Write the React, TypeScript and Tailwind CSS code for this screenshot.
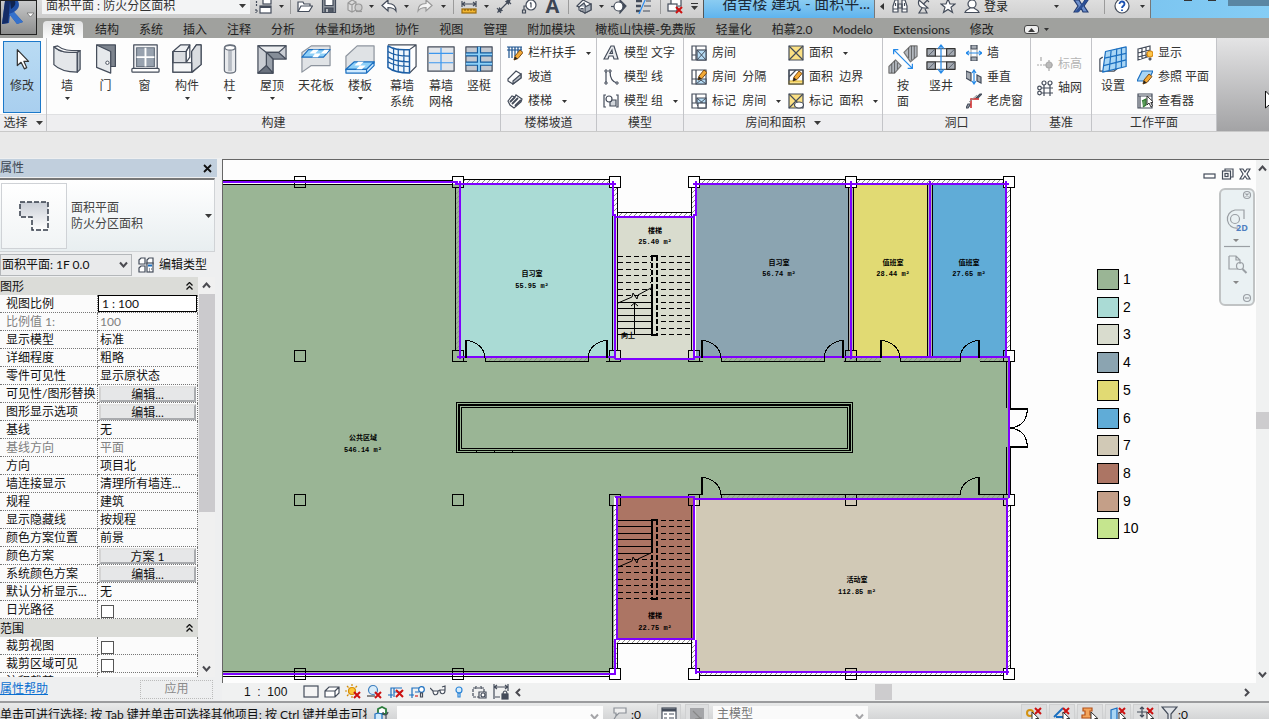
import React from "react";

type Kids = { children?: React.ReactNode };

const INK = "#444c5a";
const BLUE = "#1b6fc0";

/* ---------- small drawing helpers ---------- */

function Svg({ w = 16, h = 16, children }: Kids & { w?: number; h?: number }) {
  return (
    <svg width={w} height={h} viewBox={`0 0 ${w} ${h}`} fill="none" stroke={INK} strokeWidth="1.2" className="block shrink-0" aria-hidden="true">
      {children}
    </svg>
  );
}

function BigSvg({ children }: Kids) {
  return (
    <svg width="30" height="30" viewBox="0 0 32 32" fill="none" stroke={INK} strokeWidth="1.3" strokeLinejoin="round" className="block shrink-0" aria-hidden="true">
      {children}
    </svg>
  );
}

function Caret({ up = false }: { up?: boolean }) {
  return (
    <svg width="7" height="4" viewBox="0 0 7 4" className="block shrink-0" aria-hidden="true">
      <path d={up ? "M0 4h7L3.500 0z" : "M0 0h7L3.500 4z"} fill="#3a3a3a" />
    </svg>
  );
}

function SmallCaret() {
  return (
    <svg width="5" height="3" viewBox="0 0 5 3" className="block shrink-0" aria-hidden="true">
      <path d="M0 0h5L2.500 3z" fill="#333" />
    </svg>
  );
}

function RedX({ x, y, s = 6 }: { x: number; y: number; s?: number }) {
  return <path d={`M${x} ${y}l${s} ${s}M${x + s} ${y}l${-s} ${s}`} stroke="#cc1111" strokeWidth="2" />;
}

function Pointer({ x, y }: { x: number; y: number }) {
  return <path d={`M${x} ${y}v9l2-2 2 4 1.500-1-1.700-3.500h3z`} fill="#fff" stroke="#333" strokeWidth="1" />;
}

function Pencil() {
  return (
    <g>
      <path d="M7 15l1-4 5-6 3 2.500-5 6z" fill="#f3a935" stroke="#7b4a12" strokeWidth="1" />
      <path d="M7 15l1-3.500 2.500 2z" fill="#222" stroke="none" />
    </g>
  );
}

/* ---------- quick access toolbar ---------- */

const qat: Record<string, React.ReactNode> = {
  windows: (
    <Svg w={17}>
      <path d="M1.500 8V1.500h6M1 11v4M1 13h3" strokeDasharray="2 1" />
      <rect x="8" y="1" width="8" height="5" fill="#fff" />
      <rect x="5" y="8" width="11" height="7" fill="#fff" />
      <path d="M5 9h11" strokeWidth="2" />
    </Svg>
  ),
  open: (
    <Svg>
      <path d="M1 13V4h5l1 2h6v2" fill="#fff" />
      <path d="M1 13.500L4 8h11.500L12 13.500z" fill="#fff" />
    </Svg>
  ),
  save: (
    <Svg>
      <path d="M1.500 1.500h13v13h-13z" fill="#8f959d" />
      <path d="M4 1.500h8v6H4z" fill="#fff" />
      <path d="M4 10h8v4.500H4z" fill="#525a66" />
      <path d="M6 11v3" stroke="#fff" />
    </Svg>
  ),
  sync: (
    <Svg>
      <path d="M1 5l4-3 4 2v8l-4 2-4-2zM1 5l4 2 4-3M5 7v7" stroke="#999" fill="#ddd" />
      <circle cx="11.500" cy="9.500" r="3.500" stroke="#999" fill="#ccc" />
      <path d="M9 13.500h6" stroke="#999" />
    </Svg>
  ),
  undo: (
    <Svg>
      <path d="M1 7.500L7 2v3.500c5 0 8 2 8 7.500-2-3-4-3.500-8-3.500V13z" fill="#fff" />
    </Svg>
  ),
  redo: (
    <Svg>
      <path d="M15 7.500L9 2v3.500c-5 0-8 2-8 7.500 2-3 4-3.500 8-3.500V13z" fill="#f4f4f4" stroke="#999" />
    </Svg>
  ),
  measure: (
    <Svg>
      <path d="M1 6h14M1 3v6M15 3v6M4 4L1.500 6 4 8M12 4l2.500 2L12 8" />
      <rect x="1" y="11" width="14" height="4" fill="#f2b632" stroke="#9c6c0c" />
      <path d="M4 11v2M7 11v2M10 11v2M13 11v2" stroke="#7b5000" strokeWidth="1" />
    </Svg>
  ),
  dim: (
    <Svg>
      <path d="M3 13L13 3M1 10l4 5M10 1l5 5" />
      <path d="M2 14l4-1.500L3.500 10zM14 2l-4 1.500L12.500 6z" fill={INK} />
    </Svg>
  ),
  tag: (
    <Svg>
      <circle cx="10" cy="7" r="5" fill="#fff" />
      <path d="M10 4.500v5M9 5.500l1-1M5 8H3v4M1.500 12h3v3h-3z" />
    </Svg>
  ),
  house: (
    <Svg>
      <path d="M1 8l6-6 8 4v6l-6 3-6-3V9z" fill="#fff" />
      <path d="M9 9l6-3v6l-6 3zM1 8l2 1 5-4 2 4" fill="#a9b1bb" />
      <path d="M5 10.500h2v3H5z" fill="#fff" />
    </Svg>
  ),
  section: (
    <Svg>
      <path d="M9 2l6 6-6 7z" fill={INK} />
      <circle cx="7.500" cy="8.500" r="4.500" fill="#fff" />
      <path d="M0 8.500h3" />
    </Svg>
  ),
  thin: (
    <Svg>
      <path d="M1 3h6M1 8h5M1 13h4" strokeWidth="2.500" />
      <path d="M11 3h5M9 8h7M8 13h7" />
      <path d="M11 0L4 16" stroke="#2a8cf0" />
    </Svg>
  ),
  close: (
    <Svg>
      <path d="M4 6V1h10v7h-3" fill="#fff" />
      <rect x="1" y="6" width="9" height="7" fill="#fff" />
      <RedX x={9} y={9} />
    </Svg>
  ),
  binoculars: (
    <Svg>
      <path d="M3 2h3v12H1V8zM13 2h-3v12h5V8z" fill="#fff" />
      <path d="M6 6h4v4H6zM1 11h5M10 11h5M3.500 5v3M12.500 5v3" />
    </Svg>
  ),
  dish: (
    <Svg>
      <path d="M3 2c-2 6 2 9 9 8z" fill="#fff" />
      <path d="M7.500 6l4-4M10 1l3 3M6 10l-3 5h8l-2-4" />
    </Svg>
  ),
  star: (
    <Svg>
      <path d="M8 1l2 5h5l-4 3.300 1.500 5L8 11.500 3.500 14.300 5 9.300 1 6h5z" fill="#fff" />
    </Svg>
  ),
  user: (
    <Svg>
      <circle cx="8" cy="6" r="4" fill="#fff" />
      <path d="M1 14.500c1-3 4-3 5-4.500h4c1 1.500 4 1.500 5 4.500z" fill="#fff" />
    </Svg>
  ),
  exchange: (
    <Svg>
      <path d="M1 2h5l3 5 3-5h3l-4 6 4 6h-5l-2-4-3 4H1l4-6z" fill="#6d8fcc" stroke="#223a70" />
      <path d="M12 2h3l-9 12H2z" fill="#2c4f94" stroke="none" />
    </Svg>
  ),
  help: (
    <Svg>
      <circle cx="8" cy="8" r="7" fill="#fff" />
      <path d="M5.500 6c0-3.500 5-3.200 5 0 0 2-2.500 2-2.500 4M8 11.500v1.500" stroke="#1a50b0" strokeWidth="1.800" />
    </Svg>
  ),
};

function Tool({ name, label, className }: { name: string; label: string; className: string }) {
  return (
    <button aria-label={label} className={`flex h-4 shrink-0 items-center justify-center ${className}`}>
      {qat[name]}
    </button>
  );
}

function Drop({ label, className }: { label: string; className: string }) {
  return (
    <button aria-label={label} className={`flex h-4 shrink-0 items-center justify-center ${className}`}>
      <SmallCaret />
    </button>
  );
}

function Rule() {
  return (
    <span className="flex h-4 w-[10px] shrink-0 justify-center">
      <span className="h-4 w-px bg-[#9b9b9b]" />
    </span>
  );
}

function QuickAccess() {
  return (
    <div className="flex h-[18px] shrink-0 items-end overflow-hidden">
      <div className="flex h-[18px] w-[666px] shrink-0 items-end bg-gradient-to-b from-[#dcdcdc] to-[#cdcdcd] pb-1 pl-[5px]">
        <label className="relative flex h-4 w-[208px] shrink-0 items-center bg-[#f3f4f5]">
          <select aria-label="视图" className="w-full appearance-none pb-px pl-1 text-xs leading-[15px] text-[#333] outline-none">
            <option>面积平面 : 防火分区面积</option>
          </select>
          <span className="pointer-events-none absolute right-1">
            <Caret />
          </span>
        </label>
        <Tool name="windows" label="切换窗口" className="w-[27px]" />
        <Drop label="窗口列表" className="w-2" />
        <Rule />
        <Tool name="open" label="打开" className="w-5" />
        <Tool name="save" label="保存" className="w-7" />
        <Tool name="sync" label="同步" className="w-[23px]" />
        <Drop label="同步选项" className="w-[11px]" />
        <Tool name="undo" label="放弃" className="w-6" />
        <Drop label="放弃列表" className="w-[11px]" />
        <Tool name="redo" label="重做" className="w-[26px]" />
        <Drop label="重做列表" className="w-[10px]" />
        <Rule />
        <Tool name="measure" label="测量" className="w-[22px]" />
        <Drop label="测量选项" className="w-3" />
        <Tool name="dim" label="对齐尺寸标注" className="w-6" />
        <Tool name="tag" label="按类别标记" className="w-[26px]" />
        <button aria-label="文字" className="h-4 w-[21px] shrink-0 font-['Open_Sans',sans-serif] text-xl leading-[14px] font-bold text-[#3b4453]">
          A
        </button>
        <Rule />
        <Tool name="house" label="默认三维视图" className="w-[22px]" />
        <Drop label="三维视图选项" className="w-3" />
        <Tool name="section" label="剖面" className="w-6" />
        <Tool name="thin" label="细线" className="w-6" />
        <Rule />
        <Tool name="close" label="关闭隐藏窗口" className="w-5" />
        <button aria-label="自定义快速访问工具栏" className="flex h-4 w-[18px] shrink-0 flex-col items-center justify-center gap-[2px]">
          <span className="h-px w-[7px] bg-[#333]" />
          <Caret />
        </button>
      </div>
      <div className="flex h-[18px] w-[171px] shrink-0 items-end justify-end overflow-hidden border-l border-[#555] bg-gradient-to-b from-[#8accf2] to-[#5fb4ee] pr-1 pb-1">
        <span className="text-[15px] leading-[22px] whitespace-nowrap text-[#1c2a38]">宿舍楼 建筑 - 面积平...</span>
      </div>
      <div className="flex h-[18px] w-[277px] shrink-0 items-end border-r border-l border-[#777] bg-gradient-to-b from-[#dedede] to-[#cfcfcf] pb-1">
        <button aria-label="收起" className="flex h-4 w-[13px] items-center justify-center">
          <svg width="4" height="7" viewBox="0 0 4 7" aria-hidden="true">
            <path d="M4 0v7L0 3.500z" fill="#333" />
          </svg>
        </button>
        <Tool name="binoculars" label="搜索" className="w-6" />
        <Tool name="dish" label="通信中心" className="w-6" />
        <Tool name="star" label="收藏夹" className="w-6" />
        <Tool name="user" label="账户" className="w-6" />
        <button className="flex h-4 flex-1 items-center justify-between pt-px pr-1 text-xs leading-4 text-[#222]">
          登录
          <SmallCaret />
        </button>
        <Tool name="exchange" label="应用商店" className="w-9" />
        <Rule />
        <Tool name="help" label="帮助" className="w-[25px]" />
        <Drop label="帮助选项" className="w-4" />
      </div>
      <div className="flex h-[18px] min-w-0 flex-1 items-start justify-end bg-gradient-to-r from-[#7cc5f0] to-[#85cdf5]">
        <span className="mr-4 h-px w-2 bg-[#333]" />
        <span className="mr-3 h-px w-2 bg-[#333]" />
        <button aria-label="关闭" className="h-[6px] w-[41px] bg-[#5a86a3]" />
      </div>
    </div>
  );
}

/* ---------- ribbon tabs ---------- */

const tabs = ["结构", "系统", "插入", "注释", "分析", "体量和场地", "协作", "视图", "管理", "附加模块", "橄榄山快模-免费版", "轻量化", "柏慕2.0", "Modelo", "Extensions", "修改"];

function Tabs() {
  return (
    <nav className="flex h-5 items-end overflow-hidden bg-[#a0a19e] pl-[6px] text-xs leading-[17px] text-[#222]">
      <button className="h-[17px] rounded-t-sm bg-gradient-to-b from-[#e2e3e4] to-[#fbfbfb] px-2">建筑</button>
      <span className="w-[2px]" />
      {tabs.map((t) => (
        <button key={t} className="h-[17px] shrink-0 px-[10px] whitespace-nowrap">
          {t}
        </button>
      ))}
      <button aria-label="最小化功能区" className="ml-5 flex h-[17px] items-center gap-[5px]">
        <span className="flex h-[9px] w-[15px] items-center justify-center rounded-[3px] border border-[#444] bg-[#eee]">
          <Caret up />
        </span>
        <SmallCaret />
      </button>
    </nav>
  );
}

/* ---------- ribbon icons ---------- */

const big: Record<string, React.ReactNode> = {
  arrow: (
    <BigSvg>
      <path d="M11 6v17l4-3.500 3.500 7 2.500-1.300-3-6.700h5z" fill="#fff" stroke="#333" />
    </BigSvg>
  ),
  wall: (
    <BigSvg>
      <path d="M2 3c7 6 13 6 25 6v21C15 30 8 28 2 22z" fill="#e4e7ea" />
      <path d="M2 3l4-1c6 5 12 5 24 5l-3 2C15 9 9 9 2 3z" fill="#fff" />
      <path d="M27 9l3-2v20l-3 3z" fill="#b9bfc7" />
    </BigSvg>
  ),
  door: (
    <BigSvg>
      <path d="M6 1h20v23h-6" fill="#7d848e" />
      <path d="M6 1l15 7v23L6 25z" fill="#e6e9ec" />
      <circle cx="17.500" cy="20" r="1.800" fill="#fff" strokeWidth="1" />
    </BigSvg>
  ),
  window: (
    <BigSvg>
      <rect x="4" y="1" width="25" height="26" fill="#f4f5f7" />
      <rect x="7" y="4" width="19" height="20" fill="#98a2af" stroke="#6b7582" />
      <path d="M16.500 4v20M7 14h19" stroke="#fff" strokeWidth="2" />
      <rect x="2" y="26" width="29" height="4" rx="1" fill="#fff" />
    </BigSvg>
  ),
  component: (
    <BigSvg>
      <path d="M1 8l8-7h10l-4 7v12h6V8l5-7h5v21l-9 8H1z" fill="#eef0f2" />
      <path d="M21 8v22l10-8V1h-5zM15 8v12H1V8z" fill="#dadde1" />
      <path d="M1 8h14l4-7v13l-4 6H1zM15 8l4-7" />
      <path d="M1 20v10h20V20z" fill="#f5f6f7" />
    </BigSvg>
  ),
  column: (
    <BigSvg>
      <path d="M10 4c0-4 12-4 12 0v24c0 4-12 4-12 0z" fill="#e8eaed" stroke="#68707c" />
      <path d="M16 7v22" stroke="#b7bcc4" strokeWidth="4" />
      <ellipse cx="16" cy="4" rx="5.500" ry="2.500" fill="#fff" stroke="#68707c" />
    </BigSvg>
  ),
  roof: (
    <BigSvg>
      <path d="M1 2h30v14H17v15H1z" fill="#c9cdd3" />
      <path d="M1 2l9 7h13l8-7z" fill="#eceef0" />
      <path d="M10 9h13l8 7H17z" fill="#858d98" />
      <path d="M10 9v14l7 8V16z" fill="#9aa1ab" />
      <path d="M1 31l9-8 7 8z" fill="#6a727e" />
    </BigSvg>
  ),
  ceiling: (
    <BigSvg>
      <path d="M1 9v21l10-7h20V2H11z" fill="#e0e3e6" stroke="#8d949e" />
      <path d="M8 6h23l-7 8H1z" fill="#8fd0f8" stroke={BLUE} />
      <path d="M13 6h6l-4 4h6l-3 4h-6l3-4H9zM25 6h5l-3 4h-6z" fill="#fff" stroke="none" />
    </BigSvg>
  ),
  floor: (
    <BigSvg>
      <path d="M1 13L13 2h18v18l-8 8H1z" fill="#dfe2e5" stroke="#8d949e" />
      <path d="M10 19h21l-8 8H1z" fill="#8fd0f8" stroke={BLUE} />
      <path d="M1 27h22v4H1zM23 27l8-8v4l-8 8z" fill="#cfeaff" stroke={BLUE} />
      <path d="M14 19h6l-4 4h6l-4 4h-6l4-4h-6z" fill="#fff" stroke="none" />
    </BigSvg>
  ),
  curtain: (
    <BigSvg>
      <path d="M24 6l7-5v23l-7 7M1 1h30" fill="#fff" />
      <path d="M1 2c6 4 12 4 23 4v25C14 31 7 30 1 25z" fill="#f0f7fd" stroke="#1c5ea5" strokeWidth="1.600" />
      <path d="M7 4v24M12 5v25M18 6v25M1 8c6 4 12 5 23 5M1 14c6 4 12 5 23 5M1 19c6 4 12 5 23 5" stroke="#1c5ea5" />
    </BigSvg>
  ),
  grid: (
    <BigSvg>
      <rect x="2" y="3" width="28" height="26" fill="#e2e5e9" />
      <path d="M3 10h26M16 4v24M3 20h26" stroke="#3c97ee" />
    </BigSvg>
  ),
  mullion: (
    <BigSvg>
      <rect x="2" y="3" width="28" height="26" fill="#c3c8d0" />
      <path d="M2 11h28M2 21h28M16 3v26" stroke="#135a9c" strokeWidth="4.500" />
      <path d="M2 11h28M2 21h28M16 3v26" stroke="#8cd0f7" strokeWidth="2" />
    </BigSvg>
  ),
  face: (
    <BigSvg>
      <path d="M17 9l7-7h7v11l-7 6z" fill="#b3b8bf" stroke="#777" />
      <path d="M1 24l7-7 6 6-7 8H1z" fill="#b3b8bf" stroke="#777" />
      <path d="M22 4v11M25 2v15M28 2v13M4 21v10M7 18v13M10 20v7" stroke="#444" strokeWidth="0.800" />
      <path d="M6 6l20 20M6 11V6h5M26 21v5h-5" stroke="#268ae8" />
    </BigSvg>
  ),
  shaft: (
    <BigSvg>
      <path d="M1 5h9v8H1zM22 5h9v8h-9zM1 19h9v8H1zM22 19h9v8h-9z" fill="#a5abb3" stroke="#333" />
      <path d="M10 5h12M10 13h12M10 19h12M10 27h12" stroke="#333" strokeWidth="1" />
      <path d="M3 12l6-6M24 12l6-6M3 26l6-6M24 26l6-6" strokeWidth="0.800" />
      <path d="M16 1v30M13 5l3-4 3 4M13 27l3 4 3-4" stroke="#268ae8" />
    </BigSvg>
  ),
  plane: (
    <BigSvg>
      <path d="M5 14l-3 2v13h15l6-5" fill="#fff" />
      <path d="M8 8l22-5v21L5 30z" fill="#a9d6f5" stroke={BLUE} />
      <path d="M14 7l-2 21M20 5l-1 22M25 4v21M7 15l23-5M6 23l24-6" stroke={BLUE} />
    </BigSvg>
  ),
};

const small: Record<string, React.ReactNode> = {
  railing: (
    <Svg>
      <path d="M0 2h15M0 5h15M2 2v11M5 2v11M8 2v9M11 2v6M14 2v3" stroke="#174f8c" />
      <Pencil />
    </Svg>
  ),
  ramp: (
    <Svg>
      <path d="M1 10L9 2l5 3v4l-8 6-5-3z" fill="#fff" />
      <path d="M6 12l8-7v4l-8 6z" fill="#b9bfc7" />
    </Svg>
  ),
  stair: (
    <Svg>
      <path d="M1 8l4-5 3 1 1-2 3 2 3 2-1 3-7 6-4-3z" fill="#fff" />
      <path d="M3 9l5-5M5 11l6-6M8 13l6-6" strokeWidth="1.800" />
    </Svg>
  ),
  text: (
    <Svg>
      <path d="M1 14L8 1h3l4 13h-4l-1-3H6l-1 3z" fill="#e9ebee" />
      <path d="M7 8.500h2.500L9 5z" fill="#fff" />
    </Svg>
  ),
  line: (
    <Svg>
      <path d="M3 3v11M7 2c0 7 2 11 7 12" />
      <path d="M2 1h2v2H2zM2 13h2v2H2zM6 1h2v2H6zM13 13h2v2h-2z" fill="#fff" strokeWidth="1" />
    </Svg>
  ),
  group: (
    <Svg>
      <path d="M3 2H1v12h2M13 2h2v12h-2" />
      <path d="M7 7h6v6H7z" fill="#d2d6db" />
      <circle cx="6" cy="6" r="3" fill="#fff" />
    </Svg>
  ),
  room: (
    <Svg>
      <path d="M1 1h14v14H1zM5 1v9H1M5 10v5" fill="#fff" />
      <rect x="6" y="5" width="9" height="10" fill="#b6dcf5" />
      <path d="M6 5l9 10M15 5L6 15" strokeWidth="1" />
    </Svg>
  ),
  roomSplit: (
    <Svg>
      <path d="M1 1h14v14H1zM5 1v9H1" fill="#fff" />
      <path d="M5 10h10v5H5z" fill="#b6dcf5" />
      <path d="M5 15l5-4 5 4" strokeWidth="1" />
      <g transform="translate(0 -4)">
        <Pencil />
      </g>
    </Svg>
  ),
  roomTag: (
    <Svg>
      <path d="M1 1h14v14H1zM5 1v9H1" fill="#fff" />
      <path d="M6 5h9v6H6z" fill="#b6dcf5" />
      <path d="M6 5l9 8M15 5l-9 8" strokeWidth="1" />
      <rect x="7" y="10" width="8" height="5" fill="#fff" />
    </Svg>
  ),
  area: (
    <Svg>
      <path d="M1 1h14v14H1z" fill="#fbe083" />
      <path d="M1 1l14 14M15 1L1 15" />
    </Svg>
  ),
  areaEdge: (
    <Svg>
      <path d="M1 1h14v14H1z" fill="#fff" />
      <path d="M1 12h14v3H1z" fill="#fbe083" stroke="#d6ac25" />
      <path d="M1 1h14v14H1zM1 8l7-7" />
      <g transform="translate(-2 -3)">
        <Pencil />
      </g>
    </Svg>
  ),
  areaTag: (
    <Svg>
      <path d="M1 1h14v14H1z" fill="#fbe083" />
      <path d="M1 1l14 14M15 1L1 15" />
      <ellipse cx="11" cy="12" rx="4.500" ry="3" fill="#fff" />
    </Svg>
  ),
  openWall: (
    <Svg>
      <path d="M5 0h6v4H5zM5 12h6v4H5z" fill="#a5abb3" />
      <path d="M5 4v8M11 4v8" stroke="#999" strokeWidth="1" />
      <path d="M0 8h16M3 6L0 8l3 2M13 6l3 2-3 2" stroke="#268ae8" />
    </Svg>
  ),
  openVert: (
    <Svg>
      <path d="M0 2l5 2v8L0 9zM11 6l4 2v6l-4-2z" fill="#a5abb3" />
      <path d="M8 1v14M6 4l2-3 2 3M6 12l2 3 2-3" stroke="#268ae8" />
    </Svg>
  ),
  dormer: (
    <Svg>
      <path d="M0 15l2-4h2v1l-2 3zM10 5l4-4h2l-4 4z" fill="#a5abb3" />
      <path d="M5 15V6h8" stroke="#c22" strokeWidth="1.500" />
      <path d="M3 9l8-7" stroke="#999" strokeWidth="1" />
    </Svg>
  ),
  level: (
    <Svg>
      <path d="M0 9h7" strokeDasharray="2 1" stroke="#aaa" />
      <path d="M4 1v4M12 4v11M7 9h9" stroke="#aaa" />
      <circle cx="12" cy="9" r="3" fill="#bbb" stroke="#aaa" />
    </Svg>
  ),
  axis: (
    <Svg>
      <path d="M7 5v11M13 5v11M4 8h12M4 13h12" />
      <circle cx="7" cy="3" r="2" fill="#fff" />
      <circle cx="13" cy="3" r="2" fill="#fff" />
      <circle cx="2.500" cy="8" r="1.800" fill="#fff" />
      <circle cx="2.500" cy="13" r="1.800" fill="#fff" />
    </Svg>
  ),
  show: (
    <Svg>
      <path d="M1 4l12-3v10L1 15zM5 3v11M9 2v11M1 8l12-3M1 12l12-3" fill="#fff" />
      <circle cx="13" cy="9" r="3" fill="#ffc64a" stroke="#d98a10" />
      <path d="M12 13h2v2h-2z" fill="#777" strokeWidth="0.800" />
    </Svg>
  ),
  refPlane: (
    <Svg>
      <path d="M5 2h11l-5 10H0z" fill="#a9d6f5" stroke={BLUE} />
      <g transform="translate(-1 0)">
        <Pencil />
      </g>
    </Svg>
  ),
  viewer: (
    <Svg>
      <path d="M1 1h14v14H1z" fill="#fff" />
      <path d="M1 3h14M3 3v12" />
      <path d="M5 8l4-2v6l-3 2" fill="#5b9a5b" stroke="#2f7a2f" />
      <Pointer x={10} y={3} />
    </Svg>
  ),
};

/* ---------- ribbon ---------- */

function BigTool({ icon, lines, drop = false, className }: { icon: string; lines: string[]; drop?: boolean; className: string }) {
  return (
    <button className={`flex shrink-0 flex-col items-center pt-[6px] ${className}`}>
      {big[icon]}
      <span className="mt-1 flex flex-col text-xs leading-4 whitespace-nowrap">
        {lines.map((l) => (
          <span key={l}>{l}</span>
        ))}
      </span>
      {drop && (
        <span className="mt-[3px]">
          <SmallCaret />
        </span>
      )}
    </button>
  );
}

function SmallTool({ icon, text, drop = false, muted = false }: { icon: string; text: string; drop?: boolean; muted?: boolean }) {
  return (
    <button className={`flex h-6 items-center gap-[5px] text-xs whitespace-pre ${muted ? "text-[#b4b4b4]" : ""}`}>
      {small[icon]}
      <span>{text}</span>
      {drop && (
        <span className="pl-[5px]">
          <SmallCaret />
        </span>
      )}
    </button>
  );
}

function Panel({ title, drop = false, className, children }: Kids & { title: string; drop?: boolean; className: string }) {
  return (
    <section className={`flex shrink-0 flex-col border-r border-[#c3c4c8] bg-[#fdfdfd] ${className}`}>
      <div className="flex min-h-0 flex-1 items-start">{children}</div>
      <div className="flex h-[17px] items-center justify-center gap-2 border-t border-[#dfe0e2] bg-[#eeeef0] text-xs leading-4">
        {title}
        {drop && <Caret />}
      </div>
    </section>
  );
}

function Stack({ children, className = "" }: Kids & { className?: string }) {
  return <div className={`flex flex-col pt-[3px] ${className}`}>{children}</div>;
}

function Ribbon() {
  return (
    <div className="flex h-[94px] shrink-0 overflow-hidden border-b border-[#c9c9c9] bg-gradient-to-b from-[#e4e4e5] to-[#a3a3a5] text-[#333]">
      <Panel title="选择" drop className="w-[47px]">
        <div className="px-[3px] pt-[3px]">
          <button className="flex h-[72px] w-[38px] flex-col items-center border border-[#1b78c9] bg-gradient-to-b from-[#b9dbf3] to-[#a9cfef] pt-[2px] text-xs text-[#333]">
            {big.arrow}
            <span className="mt-1 leading-4">修改</span>
          </button>
        </div>
      </Panel>
      <Panel title="构建" className="w-[454px]">
        <BigTool icon="wall" lines={["墙"]} drop className="w-10" />
        <BigTool icon="door" lines={["门"]} className="w-[37px]" />
        <BigTool icon="window" lines={["窗"]} className="w-[41px]" />
        <BigTool icon="component" lines={["构件"]} drop className="w-11" />
        <BigTool icon="column" lines={["柱"]} drop className="w-[41px]" />
        <BigTool icon="roof" lines={["屋顶"]} drop className="w-11" />
        <BigTool icon="ceiling" lines={["天花板"]} className="w-11" />
        <BigTool icon="floor" lines={["楼板"]} drop className="w-11" />
        <BigTool icon="curtain" lines={["幕墙", "系统"]} className="w-10" />
        <BigTool icon="grid" lines={["幕墙", "网格"]} className="w-[38px]" />
        <BigTool icon="mullion" lines={["竖梃"]} className="w-[38px]" />
      </Panel>
      <Panel title="楼梯坡道" className="w-24">
        <Stack className="pl-[6px]">
          <SmallTool icon="railing" text="栏杆扶手" drop />
          <SmallTool icon="ramp" text="坡道" />
          <SmallTool icon="stair" text="楼梯" drop />
        </Stack>
      </Panel>
      <Panel title="模型" className="w-[87px]">
        <Stack className="pl-[6px]">
          <SmallTool icon="text" text="模型 文字" />
          <SmallTool icon="line" text="模型 线" />
          <SmallTool icon="group" text="模型 组" drop />
        </Stack>
      </Panel>
      <Panel title="房间和面积" drop className="w-[199px]">
        <Stack className="w-[104px] pl-[7px]">
          <SmallTool icon="room" text="房间" />
          <SmallTool icon="roomSplit" text="房间  分隔" />
          <SmallTool icon="roomTag" text="标记  房间" drop />
        </Stack>
        <Stack>
          <SmallTool icon="area" text="面积" drop />
          <SmallTool icon="areaEdge" text="面积  边界" />
          <SmallTool icon="areaTag" text="标记  面积" drop />
        </Stack>
      </Panel>
      <Panel title="洞口" className="w-[148px]">
        <BigTool icon="face" lines={["按", "面"]} className="w-10" />
        <BigTool icon="shaft" lines={["竖井"]} className="w-9" />
        <Stack className="pl-[7px]">
          <SmallTool icon="openWall" text="墙" />
          <SmallTool icon="openVert" text="垂直" />
          <SmallTool icon="dormer" text="老虎窗" />
        </Stack>
      </Panel>
      <Panel title="基准" className="w-[61px]">
        <div className="flex flex-col pt-[14px] pl-[6px]">
          <SmallTool icon="level" text="标高" muted />
          <SmallTool icon="axis" text="轴网" />
        </div>
      </Panel>
      <Panel title="工作平面" className="w-[125px]">
        <BigTool icon="plane" lines={["设置"]} className="w-[42px]" />
        <Stack className="pl-[3px]">
          <SmallTool icon="show" text="显示" />
          <SmallTool icon="refPlane" text="参照 平面" />
          <SmallTool icon="viewer" text="查看器" />
        </Stack>
      </Panel>
      <div className="flex flex-1 items-end justify-end overflow-hidden pb-[22px]">
        <svg width="4" height="18" viewBox="0 0 4 18" aria-hidden="true">
          <path d="M.5 0v17l6-5V6z" fill="#fff" stroke="#111" />
        </svg>
      </div>
    </div>
  );
}

/* ---------- properties palette ---------- */

type Row = { name: string; value?: string; kind?: "button" | "check" | "input"; muted?: boolean };

const graphics: Row[] = [
  { name: "视图比例", value: "1 : 100", kind: "input" },
  { name: "比例值 1:", value: "100", muted: true },
  { name: "显示模型", value: "标准" },
  { name: "详细程度", value: "粗略" },
  { name: "零件可见性", value: "显示原状态" },
  { name: "可见性/图形替换", value: "编辑...", kind: "button" },
  { name: "图形显示选项", value: "编辑...", kind: "button" },
  { name: "基线", value: "无" },
  { name: "基线方向", value: "平面", muted: true },
  { name: "方向", value: "项目北" },
  { name: "墙连接显示", value: "清理所有墙连..." },
  { name: "规程", value: "建筑" },
  { name: "显示隐藏线", value: "按规程" },
  { name: "颜色方案位置", value: "前景" },
  { name: "颜色方案", value: "方案 1", kind: "button" },
  { name: "系统颜色方案", value: "编辑...", kind: "button" },
  { name: "默认分析显示...", value: "无" },
  { name: "日光路径", kind: "check" },
];

const extents: Row[] = [
  { name: "裁剪视图", kind: "check" },
  { name: "裁剪区域可见", kind: "check" },
  { name: "注释裁剪", kind: "check" },
];

function RowValue({ row }: { row: Row }) {
  if (row.kind === "button")
    return (
      <button aria-label={row.name} className="mx-px block h-[16px] w-[97px] border-2 border-[#a9abae] border-t-[#e3e3e3] border-l-[#d4d4d4] bg-[#e6e7e8] text-center leading-[14px]">
        {row.value}
      </button>
    );
  if (row.kind === "check") return <input type="checkbox" aria-label={row.name} className="mt-[3px] ml-[3px] block h-[13px] w-[13px] appearance-none border border-[#555] bg-white" />;
  if (row.kind === "input") return <input aria-label={row.name} defaultValue={row.value} className="block h-[17px] w-full border border-black bg-white pl-[3px] leading-[15px] outline-none" />;
  return <span className="block pl-[2px]">{row.value}</span>;
}

function Group({ title, rows }: { title: string; rows: Row[] }) {
  return (
    <tbody>
      <tr>
        <th colSpan={2} className="h-[18px] bg-[#dbdcd8] p-0 text-left font-normal">
          <div className="flex h-[17px] items-center justify-between pr-[5px]">
            {title}
            <svg width="7" height="8" viewBox="0 0 7 8" fill="none" stroke="#111" strokeWidth="1.300" aria-hidden="true">
              <path d="M.5 3.500l3-3 3 3M.5 7.500l3-3 3 3" />
            </svg>
          </div>
        </th>
      </tr>
      {rows.map((r) => (
        <tr key={r.name} className={r.muted ? "text-[#808080]" : ""}>
          <td className="h-[18px] overflow-hidden border-r border-b border-dotted border-[#777] p-0 pl-[6px] whitespace-nowrap">{r.name}</td>
          <td className="h-[18px] overflow-hidden border-r border-b border-dotted border-[#777] p-0 whitespace-nowrap">
            <RowValue row={r} />
          </td>
        </tr>
      ))}
    </tbody>
  );
}

function Chevron({ d, soft = false }: { d: string; soft?: boolean }) {
  return (
    <svg width="9" height="9" viewBox="0 0 9 9" fill="none" stroke={soft ? "#a5a5a8" : "#4a4a50"} strokeWidth="2" className="block shrink-0" aria-hidden="true">
      <path d={d} />
    </svg>
  );
}

function Properties() {
  return (
    <aside className="flex w-[222px] shrink-0 flex-col bg-[#eeeff0] pt-px pr-[5px] text-xs text-[#111]">
      <header className="flex h-[18px] shrink-0 items-center justify-between bg-[#c1cfdd] pr-[5px] text-[#3c4652]">
        属性
        <button aria-label="关闭属性" className="p-0">
          <svg width="9" height="9" viewBox="0 0 9 9" stroke="#111" strokeWidth="1.800" aria-hidden="true">
            <path d="M1 1l7 7M8 1L1 8" />
          </svg>
        </button>
      </header>
      <div className="mt-px mr-[2px] flex h-[74px] shrink-0 items-center border-t-2 border-r border-b border-[#d0d3d6] border-t-[#777] bg-gradient-to-b from-white to-[#e8eef0] pr-[2px] pl-px">
        <div className="flex h-[66px] w-[66px] shrink-0 items-center justify-center border border-[#cfd2d6] bg-gradient-to-b from-white to-[#f1f4f5]">
          <svg width="30" height="30" viewBox="0 0 30 30" aria-hidden="true">
            <defs>
              <linearGradient id="thumb" x1="0" y1="0" x2="0" y2="1">
                <stop offset="0" stopColor="#c9ced6" />
                <stop offset="1" stopColor="#ffffff" />
              </linearGradient>
            </defs>
            <path d="M1 1h28v28H13V16H1z" fill="url(#thumb)" stroke="#333b48" strokeWidth="1.500" strokeDasharray="5 2" />
          </svg>
        </div>
        <div className="flex-1 pl-1 leading-4 text-[#444]">
          <div>面积平面</div>
          <div>防火分区面积</div>
        </div>
        <button aria-label="类型选择器">
          <Caret />
        </button>
      </div>
      <div className="flex h-[25px] shrink-0 items-center">
        <label className="relative flex w-[132px] shrink-0 items-center">
          <select aria-label="类型" className="h-[22px] w-full appearance-none border border-[#b4b7ba] bg-[#e9eaeb] pl-px leading-5 outline-none">
            <option>面积平面: 1F 0.0</option>
          </select>
          <span className="pointer-events-none absolute right-1">
            <Chevron d="M1 2.500l3.500 4 3.500-4" />
          </span>
        </label>
        <button className="ml-[6px] flex items-center gap-[5px] leading-4">
          <Svg>
            <path d="M1 3l2-2h4v6H1zM9 3l2-2h4v6H9zM1 11l2-2h4v6H1z" fill="#fff" />
            <rect x="9" y="6" width="6" height="9" fill="#fff" />
            <path d="M10 8.500h4" stroke={BLUE} strokeWidth="2" />
            <path d="M11 12h1M13 12h1M11 14h1" />
          </Svg>
          编辑类型
        </button>
      </div>
      <div className="flex min-h-0 flex-1">
        <div className="w-[198px] shrink-0 overflow-hidden bg-[#fbfbfb]">
          <table className="w-full table-fixed border-separate border-spacing-0 leading-[17px]">
            <colgroup>
              <col className="w-[98px]" />
              <col />
            </colgroup>
            <Group title="图形" rows={graphics} />
            <Group title="范围" rows={extents} />
          </table>
        </div>
        <div className="flex w-[17px] shrink-0 flex-col items-center bg-[#f0f0f0]">
          <button aria-label="向上滚动" className="flex h-[17px] items-center">
            <Chevron d="M1 6.500l3.500-4 3.500 4" />
          </button>
          <div className="h-[218px] w-4 bg-[#cbcacd]" />
          <button aria-label="向下滚动" className="mt-auto flex h-[17px] items-center">
            <Chevron d="M1 2.500l3.500 4 3.500-4" />
          </button>
        </div>
      </div>
      <div className="flex h-6 shrink-0 items-center justify-between pr-1">
        <a href="#help" className="leading-4 text-[#0a6fd0] underline">
          属性帮助
        </a>
        <button className="h-[19px] w-[73px] border border-dotted border-[#bbb] leading-4 text-[#8a8a8a]">应用</button>
      </div>
    </aside>
  );
}

/* ---------- floor plan ---------- */

const GREEN = "#9ab595";
const PURPLE = "#7f00ff";
const swatches = [GREEN, "#aadbd5", "#d9dcce", "#8ba4b1", "#e1da73", "#60acd7", "#d1c9b6", "#ac7564", "#c49f88", "#c5e58e"];

function Column({ x, y, fill = "none" }: { x: number; y: number; fill?: string }) {
  return <rect x={x - 5.5} y={y - 5.5} width="11" height="11" fill={fill} stroke="#000" />;
}

function Door({ x, y, dir }: { x: number; y: number; dir: 1 | -1 }) {
  return (
    <g fill="none" stroke="#000">
      <path d={`M${x} ${y - 18}V${y}`} strokeWidth="2" />
      <path d={`M${x} ${y - 17.5}C${x + 12 * dir} ${y - 17} ${x + 19 * dir} ${y - 8} ${x + 19 * dir} ${y}`} />
    </g>
  );
}

const stepOffsets = [0, 6, 13, 19, 26, 33, 39, 46, 52, 59, 65, 72, 78];

function Stairs({ top, up }: { top: number; up: boolean }) {
  return (
    <g fill="none" stroke="#000">
      {stepOffsets.map((o, i) => {
        const solid = up ? i > 6 : i < 6;
        return (
          <g key={o}>
            <path d={`M618 ${top + o + 0.5}H651`} strokeDasharray={solid ? undefined : "5 3"} />
            <path d={`M661 ${top + o + 0.5}H691`} strokeDasharray="5 3" />
          </g>
        );
      })}
      <path d={`M652 ${top}V${top + 79}`} strokeWidth="2" strokeDasharray="5 2" />
      <path d={up ? `M652 ${top + 32}V${top + 79}` : `M652 ${top}V${top + 33}`} strokeWidth="2" />
      <path d={`M657 ${top}V${top + 79}`} strokeWidth="2" strokeDasharray="5 2" />
      <path d={`M651 ${top}H658M651 ${top + 79}H658`} strokeWidth="2" />
      {up ? (
        <path d={`M618 ${top + 47}l14-6 1-4 4 6 1-4 13-7M634.500 ${top + 78}V${top + 47}M631 ${top + 50}l3.500-3 3.500 3`} shapeRendering="auto" />
      ) : (
        <path d={`M618 ${top + 47}l14-6 1-4 4 6 1-4 13-6`} shapeRendering="auto" />
      )}
    </g>
  );
}

function RoomLabel({ x, y, name, area, gap = 12 }: { x: number; y: number; name: string; area: string; gap?: number }) {
  return (
    <g fill="#000" textAnchor="middle" className="font-['Liberation_Mono','Noto_Sans_CJK_SC',monospace] text-[7px] font-bold">
      <text x={x} y={y + 3}>
        {name}
      </text>
      <text x={x} y={y + gap + 3}>
        {area}
      </text>
    </g>
  );
}

function FloorPlan() {
  return (
    <svg width="1033" height="522" viewBox="223 160 1033 522" className="block shrink-0" shapeRendering="crispEdges" role="img" aria-label="防火分区面积平面图">
      <defs>
        <pattern id="hatch" width="5" height="5" patternUnits="userSpaceOnUse">
          <path d="M0 5L5 0" stroke="#8c8c8c" strokeWidth="1" />
        </pattern>
      </defs>

      {/* rooms */}
      <path d="M222 184H459V358H1009V499H694V497H614V673H222z" fill={GREEN} />
      <rect x="460" y="184" width="154" height="173" fill={swatches[1]} />
      <rect x="616" y="217" width="78" height="142" fill={swatches[2]} />
      <rect x="696" y="184" width="153" height="173" fill={swatches[3]} />
      <rect x="849" y="184" width="4" height="173" fill="#b5b3ac" />
      <rect x="853" y="184" width="75" height="173" fill={swatches[4]} />
      <rect x="928" y="184" width="5" height="173" fill="#b5b3ac" />
      <rect x="933" y="184" width="74" height="173" fill={swatches[5]} />
      <rect x="696" y="499" width="311" height="173" fill={swatches[6]} />
      <rect x="616" y="497" width="79" height="142" fill={swatches[7]} />

      {/* hatched walls */}
      <g fill="url(#hatch)">
        <rect x="464" y="180" width="146" height="4" />
        <rect x="700" y="180" width="304" height="4" />
        <rect x="456" y="188" width="4" height="162" />
        <rect x="613" y="188" width="4" height="25" />
        <rect x="692" y="188" width="4" height="25" />
        <rect x="617" y="213" width="76" height="4" />
        <rect x="1007" y="188" width="4" height="162" />
        <rect x="485" y="358" width="103" height="4" />
        <rect x="721" y="358" width="103" height="4" />
        <rect x="843" y="358" width="38" height="4" />
        <rect x="900" y="358" width="60" height="4" />
        <rect x="979" y="358" width="25" height="4" />
        <rect x="721" y="495" width="239" height="4" />
        <rect x="979" y="495" width="25" height="4" />
        <rect x="613" y="506" width="4" height="162" />
        <rect x="617" y="640" width="76" height="3" />
        <rect x="692" y="643" width="4" height="25" />
        <rect x="1007" y="506" width="4" height="163" />
        <rect x="700" y="672" width="304" height="4" />
      </g>

      {/* wall outlines */}
      <g fill="none" stroke="#000">
        <path d="M222 180.500H453M222 184.500H453M463 179.500H610M699 179.500H1004" />
        <path d="M455.500 188V350M612.500 213V350M617.500 188V350M691.500 188V350" />
        <path d="M617 212.500H692" />
        <path d="M848.500 188V350M853.500 188V350M927.500 184V357M932.500 184V357M1010.500 188V350" />
        <path d="M485.500 357V361.500H588.500V357M721.500 357V361.500H824.500V357M843.500 361.500H881M900.500 357V361.500H960.500V357M979.500 361.500H1004M464 361.500H467M606 361.500H610M699 361.500H703" />
        <path d="M721.500 499V494.500H960M979 494.500H1004M699 494.500H702" />
        <path d="M612.500 506V668M617.500 643V668M691.500 506V668M617 643.500H692" />
        <path d="M222 671.500H609M222 676.500H609M699 675.500H1004M1010.500 506V669" />
        <path d="M1006.500 361V408M1010.500 361V408M1006.500 447V494M1010.500 447V494" />
      </g>

      {/* atrium */}
      <g fill="none" stroke="#000">
        <rect x="456.500" y="402.500" width="396" height="50" />
        <path d="M459 450V405H850V450" strokeWidth="2" />
        <path d="M458 450.500H851M476.500 450V453M494.500 450V453M512.500 450V453" />
        <rect x="461.500" y="407.500" width="386" height="41" />
      </g>

      <Stairs top={256} up />
      <Stairs top={520} up={false} />

      {/* structural grid */}
      <Column x={300} y={182} />
      <Column x={458} y={182} />
      <Column x={615} y={182} fill="#fff" />
      <Column x={694} y={182} fill="#fff" />
      <Column x={851} y={182} fill="#fff" />
      <Column x={1009} y={182} fill="#fff" />
      {[356, 500].map((y) => (
        <g key={y}>
          {[300, 458, 615, 694, 851, 1009].map((x) => (
            <Column key={x} x={x} y={y} />
          ))}
        </g>
      ))}
      <Column x={300} y={674} />
      <Column x={458} y={674} />
      <Column x={615} y={674} fill="#fff" />
      <Column x={694} y={674} fill="#fff" />
      <Column x={851} y={674} />
      <Column x={1009} y={674} fill="#fff" />

      {/* area boundaries */}
      <g fill="none" stroke={PURPLE} strokeWidth="2">
        <path d="M222 182H458M455 184H616M460 181V359M613 181V216M613 215H615V359M615 217H694M694 359V215H696V181M457 357H615M615 359H695" />
        <path d="M693 184H1009M851 181V359M930 181V358M1006 181V357M694 357H1009V498" />
        <path d="M615 497H694V640M617 497V639H695M615 639V674H222M696 640V674M694 499H1007V675M696 672H1009" />
      </g>

      {/* doors */}
      <Door x={466} y={358} dir={1} />
      <Door x={607} y={358} dir={-1} />
      <Door x={702} y={358} dir={1} />
      <Door x={843} y={358} dir={-1} />
      <Door x={881} y={358} dir={1} />
      <Door x={979} y={358} dir={-1} />
      <Door x={702} y={495} dir={1} />
      <Door x={979} y={495} dir={-1} />
      <g fill="none" stroke="#000">
        <path d="M1010 409H1028M1010 447H1028" strokeWidth="2" />
        <path d="M1027.500 409C1027 420 1021 427 1010 428C1021 429 1027 436 1027.500 447" />
      </g>

      {/* room tags */}
      <RoomLabel x={532} y={273} name="自习室" area="55.95 m²" />
      <RoomLabel x={655} y={230} name="楼梯" area="25.40 m²" gap={11} />
      <RoomLabel x={779} y={262} name="自习室" area="56.74 m²" gap={11} />
      <RoomLabel x={893} y={262} name="值班室" area="28.44 m²" gap={11} />
      <RoomLabel x={969} y={262} name="值班室" area="27.65 m²" gap={11} />
      <RoomLabel x={363} y={437} name="公共区域" area="546.14 m²" />
      <RoomLabel x={857} y={579} name="活动室" area="112.85 m²" />
      <RoomLabel x={655} y={615} name="楼梯" area="22.75 m²" />
      <text x="621" y="338" className="font-['Noto_Sans_CJK_SC',sans-serif] text-[7px] font-bold">
        向上
      </text>

      {/* colour legend */}
      {swatches.map((c, i) => (
        <g key={c}>
          <rect x="1097.500" y={Math.round(269 + i * 27.7) + 0.5} width="21" height="20" fill={c} stroke="#000" />
          <text x="1123" y={Math.round(284 + i * 27.7)} className="font-['Liberation_Sans',sans-serif] text-sm">
            {i + 1}
          </text>
        </g>
      ))}
    </svg>
  );
}

/* ---------- drawing area ---------- */

function NavBar() {
  return (
    <div className="absolute top-7 right-px flex h-[118px] w-[36px] flex-col items-center rounded-md border-2 border-[#c0c3c4] bg-[#eaf1f3] text-[#9a9fa4]">
      <svg width="32" height="114" viewBox="0 0 32 114" fill="none" stroke="#9a9fa4" strokeWidth="1.200" aria-hidden="true">
        <circle cx="26" cy="5" r="3.500" />
        <path d="M24.500 3.500l3 3M27.500 3.500l-3 3" />
        <path d="M23 29V20H14a9 9 0 1 0 3 18" />
        <circle cx="14" cy="29" r="4.500" />
        <path d="M3 56.500h26" />
        <path d="M8 66h7l4 4v4M8 66v13h9M15 66v4h4" />
        <circle cx="19" cy="76" r="3.500" />
        <path d="M21.500 79l4 4" strokeWidth="2" />
        <path d="M12 49h6l-3 3zM12 91h6l-3 3z" fill="#888" stroke="none" />
        <circle cx="26" cy="108" r="3.500" />
        <path d="M24 108h4" />
        <text x="15" y="41" fill="#4f7fc0" stroke="none" className="font-['Open_Sans',sans-serif] text-[9px] font-bold">
          2D
        </text>
      </svg>
    </div>
  );
}

function ViewBar() {
  const cls = "flex h-4 shrink-0 items-center justify-center";
  return (
    <div className="flex h-[18px] shrink-0 items-center bg-[#f0f1f1] pl-[22px]">
      <button className="w-14 text-left font-['Liberation_Sans',sans-serif] text-xs leading-4 whitespace-pre text-[#111]">1  :  100</button>
      <button aria-label="详细程度" className={`${cls} w-[21px]`}>
        <Svg>
          <rect x="1" y="2" width="14" height="11" fill="#f4f4f4" />
        </Svg>
      </button>
      <button aria-label="视觉样式" className={`${cls} w-[21px]`}>
        <Svg>
          <path d="M1 7l4-4h10v6l-4 4H1zM1 7h10v6M11 7l4-4" fill="#fff" />
        </Svg>
      </button>
      <button aria-label="日光路径" className={`${cls} w-[21px]`}>
        <Svg>
          <circle cx="7" cy="7" r="3.500" fill="#ffc83c" stroke="#d48d08" />
          <path d="M7 0v2M7 12v2M0 7h2M2 2l1.500 1.500M12 2l-1.500 1.500M2 12l1.500-1.500" stroke="#d48d08" />
          <RedX x={9} y={8} />
        </Svg>
      </button>
      <button aria-label="阴影" className={`${cls} w-[22px]`}>
        <Svg>
          <circle cx="7" cy="6" r="4.500" fill="#d8ecfa" stroke="#3d7fbf" />
          <path d="M1 12h8" strokeWidth="2" stroke="#888" />
          <RedX x={9} y={8} />
        </Svg>
      </button>
      <button aria-label="裁剪视图" className={`${cls} w-[21px]`}>
        <Svg>
          <path d="M3 14V4h11M0 11h5M6 4v9M6 8h8" stroke={BLUE} />
          <RedX x={8} y={6} s={7} />
        </Svg>
      </button>
      <button aria-label="显示裁剪区域" className={`${cls} w-[21px]`}>
        <Svg>
          <path d="M3 14V4h7M0 11h5M6 8h4" stroke={BLUE} />
          <path d="M6 12h3" stroke="#c22" />
          <circle cx="12.500" cy="5.500" r="2.800" fill="#fff" stroke={BLUE} />
          <path d="M11.500 9h2v4h-2z" />
        </Svg>
      </button>
      <button aria-label="临时隐藏/隔离" className={`${cls} w-[21px]`}>
        <Svg>
          <path d="M0 4l3 3M3 7h5c0 5-5 5-5 0zM8 7l2-1M10 6h5c0 5-5 5-5 0zM15 6V2l-3 1" fill="#fff" />
        </Svg>
      </button>
      <button aria-label="显示隐藏的图元" className={`${cls} w-[21px]`}>
        <Svg>
          <circle cx="8" cy="6" r="3" fill="#d8ecfa" stroke="#2b85d8" />
          <path d="M7 9h2v4H7z" stroke="#2b85d8" />
        </Svg>
      </button>
      <button aria-label="临时视图属性" className={`${cls} w-[21px]`}>
        <Svg>
          <path d="M1 4h11v9H1zM4 2v3M9 2v3" strokeDasharray="3 1" />
          <path d="M7 8h7v6H7z" fill="#fff" />
          <circle cx="11" cy="11" r="2" />
        </Svg>
      </button>
      <button aria-label="显示约束" className={`${cls} w-[22px]`}>
        <Svg>
          <path d="M1 0v15M15 0v7M1 3h14M4 1L1.500 3 4 5M12 1l2.500 2L12 5" />
          <rect x="9" y="10" width="6" height="5" fill={INK} />
          <path d="M10 10c0-4 4-4 4 0M2 13h5" />
        </Svg>
      </button>
      <button aria-label="向左滚动" className="flex h-4 w-[13px] items-center justify-center">
        <Chevron d="M6 1L2.500 4.500 6 8" />
      </button>
      <div className="flex h-full min-w-0 flex-1 items-center">
        <div className="flex-[350]" />
        <div className="h-4 w-[17px] bg-[#cdccce]" />
        <div className="flex-[351]" />
        <button aria-label="向右滚动">
          <Chevron d="M3 1l3.500 3.500L3 8" />
        </button>
        <span className="w-[18px]" />
      </div>
    </div>
  );
}

function Drawing() {
  return (
    <main className="flex min-w-0 flex-1 flex-col pt-px">
      <div className="flex min-h-0 flex-1 border-t border-l border-[#666] bg-[#fdfdfd]">
        <div className="relative min-w-0 flex-1 overflow-hidden">
          <FloorPlan />
          <div className="absolute top-[8px] right-[5px] flex items-center gap-[5px]">
            <button aria-label="最小化视图">
              <Svg w={13} h={12}>
                <rect x="1" y="6" width="11" height="4" />
              </Svg>
            </button>
            <button aria-label="还原视图">
              <Svg w={13} h={12}>
                <path d="M4 3V1h8v8h-2" />
                <rect x="1.500" y="3" width="8" height="8" />
                <rect x="4" y="5.500" width="3" height="3" />
              </Svg>
            </button>
            <button aria-label="关闭视图">
              <Svg w={12} h={12}>
                <path d="M1 1h3l2 3 2-3h3L8 6l3 5H8L6 8l-2 3H1l3-5z" />
              </Svg>
            </button>
          </div>
          <NavBar />
        </div>
        <div className="flex w-[13px] shrink-0 flex-col items-center bg-[#f0f1f1] py-1">
          <Chevron d="M1 6.500l3.500-4 3.500 4" />
          <div className="flex-[238]" />
          <div className="h-[17px] w-[13px] bg-[#cdccce]" />
          <div className="flex-[240]" />
          <Chevron d="M1 2.500l3.500 4 3.500-4" />
        </div>
      </div>
      <ViewBar />
    </main>
  );
}

/* ---------- status bar ---------- */

function StatusBar() {
  const key = "h-5 shrink-0 border border-[#cfd0d1] bg-[#dddedf] px-[3px]";
  return (
    <footer className="flex h-[18px] shrink-0 items-start overflow-hidden border-t-2 border-[#9b9c9e] bg-gradient-to-b from-[#e9eaea] to-[#d4d5d6] pt-px text-xs text-[#111]">
      <div className="w-[367px] shrink-0 overflow-hidden pt-[2px] leading-[17px] whitespace-nowrap">单击可进行选择; 按 Tab 键并单击可选择其他项目; 按 Ctrl 键并单击可将</div>
      <button aria-label="工作集" className="w-[30px] shrink-0 pt-[2px] pl-[7px]">
        <Svg>
          <path d="M4 3l4-2 4 2v5H4z" fill="#fff" stroke="#2a7d3b" strokeWidth="1.800" />
          <path d="M1 8l3-1 4 1v6H1z" fill="#cfe9fb" stroke={BLUE} />
          <path d="M9 6c0 4 4 4 5 0M12 9v6" />
        </Svg>
      </button>
      <label className="relative mt-[2px] flex w-[206px] shrink-0">
        <select aria-label="活动工作集" className="h-5 w-full appearance-none bg-[#fcfcfc] outline-none">
          <option></option>
        </select>
        <span className="pointer-events-none absolute top-[6px] right-1">
          <Chevron soft d="M1 2.500l3.500 4 3.500-4" />
        </span>
      </label>
      <button aria-label="编辑请求" className="ml-2 flex shrink-0 gap-1 pt-[2px]">
        <Svg>
          <path d="M3 2h12v5H8l-3 3V7H3zM5 10l-3 5" stroke="#8b9097" fill="#eee" />
        </Svg>
        <span className="leading-[18px]">:0</span>
      </button>
      <button aria-label="设计选项" className={`ml-4 ${key}`}>
        <Svg>
          <rect x="1" y="2" width="14" height="14" fill="#fff" />
          <path d="M1 4h14" strokeWidth="3" />
          <path d="M3 8h3M8 8h5M3 12h3M8 12h5" />
        </Svg>
      </button>
      <button aria-label="排除选项" className={`ml-1 ${key}`}>
        <Svg>
          <rect x="1" y="2" width="14" height="14" fill="#a4a5a8" stroke="none" />
          <path d="M4 5l8 8M6 13l7-1" stroke="#888" />
        </Svg>
      </button>
      <label className="relative mt-[2px] ml-1 flex w-[155px] shrink-0">
        <select aria-label="活动设计选项" className="h-5 w-full appearance-none bg-[#fafafa] pb-1 pl-1 leading-4 text-[#777] outline-none">
          <option>主模型</option>
        </select>
        <span className="pointer-events-none absolute top-[6px] right-1">
          <Chevron soft d="M1 2.500l3.500 4 3.500-4" />
        </span>
      </label>
      <div className="min-w-0 flex-1" />
      <div className="flex shrink-0 gap-[2px] pr-[81px]">
        <button aria-label="选择链接" className={key}>
          <Svg w={18}>
            <circle cx="5" cy="7" r="3" stroke="#d39212" strokeWidth="2" />
            <RedX x={10} y={2} s={6} />
            <Pointer x={7} y={6} />
          </Svg>
        </button>
        <button aria-label="选择基线图元" className={key}>
          <Svg w={18}>
            <path d="M1 11L10 2M3 11h8" stroke={BLUE} strokeWidth="1.800" />
            <RedX x={10} y={2} s={6} />
            <Pointer x={10} y={6} />
          </Svg>
        </button>
        <button aria-label="选择锁定图元" className={key}>
          <Svg w={18}>
            <path d="M2 2h9v3H9v4h3v3H1V9h3V5H2z" fill="#f3a45b" stroke="#b5501a" />
            <Pointer x={10} y={6} />
          </Svg>
        </button>
        <button aria-label="按面选择图元" className={key}>
          <Svg w={18}>
            <path d="M2 14V4l6-2v12" fill="#a9d6f5" stroke={BLUE} />
            <RedX x={10} y={2} s={6} />
            <Pointer x={10} y={6} />
          </Svg>
        </button>
        <button aria-label="选择时拖曳图元" className={key}>
          <Svg w={18}>
            <path d="M5 1v10M0 6h10M3 3l2-2 2 2M3 9l2 2 2-2" />
            <RedX x={10} y={2} s={6} />
            <Pointer x={10} y={6} />
          </Svg>
        </button>
        <button aria-label="过滤器" className="flex pt-px">
          <Svg w={17}>
            <path d="M1 2h15l-6 7v7H7V9z" fill="#dfe2e6" />
          </Svg>
          <span className="pt-[2px]">:0</span>
        </button>
      </div>
    </footer>
  );
}

/* ---------- window ---------- */

export default function App() {
  return (
    <div className="flex h-screen flex-col overflow-hidden bg-[#e9e9e9] font-['Lato','Noto_Sans_CJK_SC',sans-serif] text-[#222]">
      <div className="flex h-[38px] shrink-0 bg-[#a0a19e]">
        <button aria-label="应用程序菜单" className="flex h-[35px] w-[37px] shrink-0 items-start border border-[#222] bg-gradient-to-b from-[#c9cacb] to-[#8c8d8d]">
          <svg width="35" height="26" viewBox="0 0 35 26" aria-hidden="true">
            <path d="M4 0h13c2 4 1 8-4 11l9 10-6 2-7-9-1 8-7 1z" fill="#1f4fa6" />
            <path d="M4 0h5l-1 13-1 9-6 1z" fill="#142c66" />
            <path d="M8 13l5-2 9 10-6 2z" fill="#3672cc" />
            <path d="M9 0h5c1 3 0 5-4 8z" fill="#0f2350" />
            <path d="M26 12h7l-3.500 4z" fill="#fff" stroke="#666" strokeWidth="0.700" />
          </svg>
        </button>
        <div className="flex min-w-0 flex-1 flex-col">
          <QuickAccess />
          <Tabs />
        </div>
      </div>
      <Ribbon />
      <div className="h-[26px] shrink-0 bg-[#e9e9e9]" />
      <div className="flex min-h-0 flex-1">
        <Properties />
        <Drawing />
      </div>
      <StatusBar />
    </div>
  );
}
